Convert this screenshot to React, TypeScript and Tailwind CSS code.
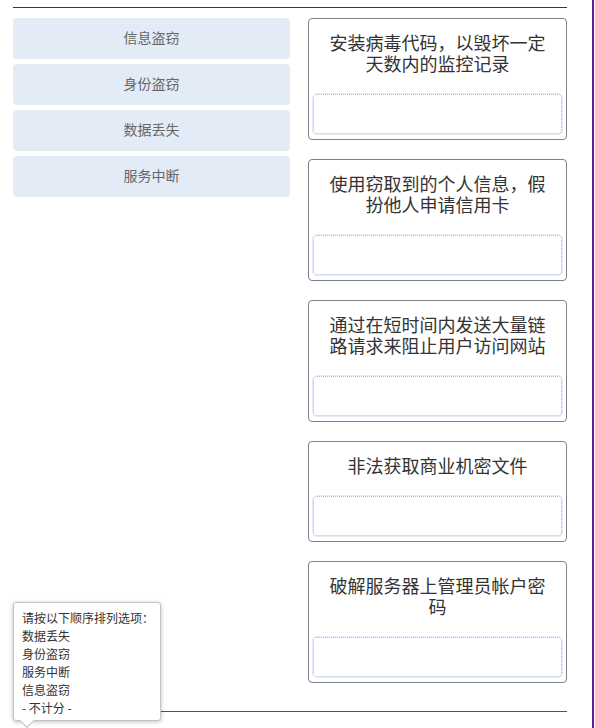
const options = ["信息盗窃", "身份盗窃", "数据丢失", "服务中断"];

const cards = [
  "安装病毒代码，以毁坏一定天数内的监控记录",
  "使用窃取到的个人信息，假扮他人申请信用卡",
  "通过在短时间内发送大量链路请求来阻止用户访问网站",
  "非法获取商业机密文件",
  "破解服务器上管理员帐户密码",
];

const hint = ["请按以下顺序排列选项：", "数据丢失", "身份盗窃", "服务中断", "信息盗窃", "- 不计分 -"];

export default function App() {
  return (
    <div
      className="relative h-[728px] w-[594px] border-r-2 border-[#6a1b9a] bg-white"
      style={{ fontFamily: '"Microsoft YaHei", "Noto Sans CJK SC", sans-serif' }}
    >
      <div className="ml-[13px] w-[554px] pt-[7px]">
        <div className="h-px bg-[#5b1f6b]" />
        <div className="flex gap-[18px] pt-[10px] pb-[28px]">
          <div className="flex w-[277px] flex-col gap-[5px] self-start">
            {options.map((o) => (
              <div
                key={o}
                className="flex h-[41px] items-center justify-center rounded-[4px] bg-[#e3ebf7] pb-[2px] text-[14px] text-[#666]"
              >
                {o}
              </div>
            ))}
          </div>
          <div className="flex w-[259px] flex-col gap-[19px]">
            {cards.map((c) => (
              <div
                key={c}
                className="rounded-[4px] border border-[#7d8288] px-[4px] pt-[13px] pb-[5px]"
              >
                <div className="px-[12px] text-center text-[18px] leading-[21px] text-[#333]">
                  {c}
                </div>
                <div className="mt-[20px] h-[40px] rounded-[4px] border border-dotted border-[#a7b6d6] outline outline-1 outline-[#efe4f8]" />
              </div>
            ))}
          </div>
        </div>
        <div className="h-px bg-[#7b2fa8]" />
      </div>

      <div className="absolute left-[13px] top-[602px] w-[148px] whitespace-nowrap rounded-[3px] border border-[#c4c4c4] bg-white pl-[8px] pr-[2px] pt-[6px] pb-[3px] text-[12px] leading-[18px] text-[#333] shadow-[0_1px_4px_rgba(0,0,0,0.25)]">
        {hint.map((h) => (
          <div key={h}>{h}</div>
        ))}
        <div className="absolute -bottom-[6px] left-[8px] h-[10px] w-[10px] rotate-45 border-r border-b border-[#c4c4c4] bg-white" />
      </div>
    </div>
  );
}
